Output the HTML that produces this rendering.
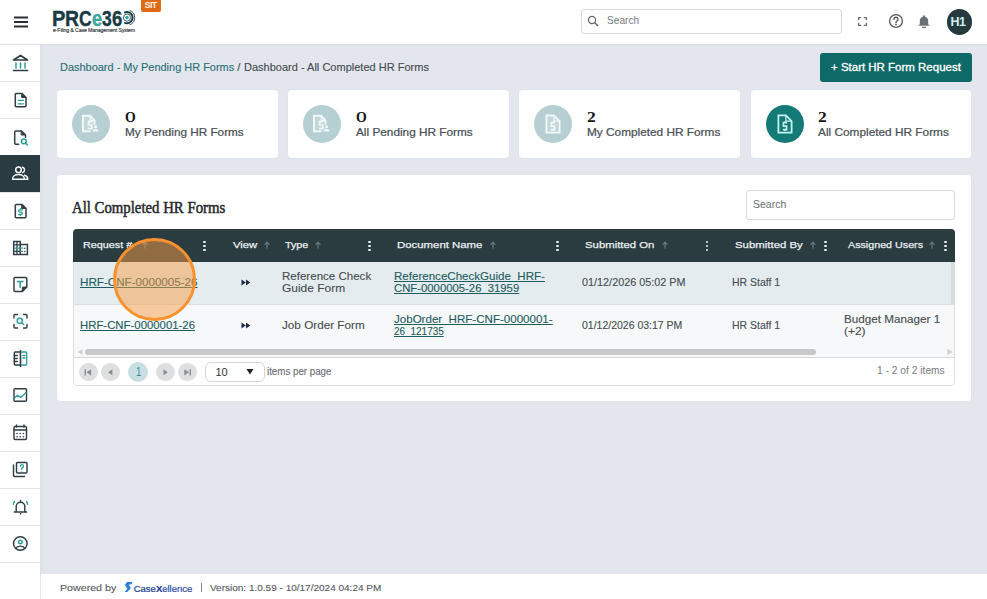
<!DOCTYPE html>
<html><head><meta charset="utf-8">
<style>
*{box-sizing:border-box;margin:0;padding:0}
html,body{width:987px;height:599px;overflow:hidden;background:#e3e7ed;font-family:"Liberation Sans",sans-serif;color:#3a3f44}
.abs{position:absolute}
.t{position:absolute;white-space:pre}
#hdr{left:0;top:0;width:987px;height:44px;background:#fff;box-shadow:0 1px 2px rgba(0,0,0,.06)}
#side{left:0;top:44px;width:40px;height:555px;background:#fff;box-shadow:1px 0 4px rgba(0,0,0,.045)}
.si{position:absolute;left:0;width:40px;height:37px;border-top:1px solid #e4e4e4}
.si svg{position:absolute;left:0;top:-1px}
.si.act{background:#2a3b41;border-top-color:#2a3b41}
#foot{left:40px;top:574px;width:947px;height:25px;background:#fff;border-left:1px solid #e8e8e8}
.card{position:absolute;background:#fff;border-radius:4px;box-shadow:0 0 2px rgba(0,0,0,.04)}
.stat{top:90px;width:221px;height:68px}
.circ{position:absolute;left:15px;top:15px;width:38px;height:38px;border-radius:50%;background:#b5cfd2}
.circ svg{position:absolute;left:0;top:0}
.kb{position:absolute;width:3px;height:11px;top:240.6px}
.kb i{position:absolute;left:.3px;width:2.5px;height:2.5px;border-radius:50%;background:#e9eff1}
.arr{position:absolute;top:241px;width:8px;height:8px}
.pb{position:absolute;top:362.5px;width:18.5px;height:18.5px;border-radius:50%;background:#dedfe0}
.pb svg{position:absolute;left:0;top:0}
</style></head><body>
<div id="hdr" class="abs">
  <svg class="abs" style="left:13px;top:16px" width="16" height="12" viewBox="0 0 16 12"><path d="M1 1.5h14M1 6h14M1 10.5h14" stroke="#2a2f33" stroke-width="2"/></svg>
  <div class="abs" style="left:141px;top:0;width:20px;height:11.5px;background:#de6a14;border-radius:0 0 2px 2px"></div>
  <div class="abs" style="left:580.5px;top:9.3px;width:261.5px;height:25.2px;border:1px solid #d9d9d9;border-radius:3px;background:#fff"></div>
  <svg class="abs" style="left:587px;top:15px" width="13" height="12" viewBox="0 0 13 12"><circle cx="5" cy="5" r="3.6" fill="none" stroke="#666" stroke-width="1.2"/><path d="M7.7 7.7l3.3 3.3" stroke="#666" stroke-width="1.5"/></svg>
  <svg class="abs" style="left:857px;top:16px" width="11" height="11" viewBox="0 0 11 11"><path d="M1.6 4.2V1.6h2.6M6.8 1.6h2.6v2.6M9.4 6.8v2.6H6.8M4.2 9.4H1.6V6.8" fill="none" stroke="#6a6e72" stroke-width="1.3"/></svg>
  <svg class="abs" style="left:888px;top:13px" width="16" height="16" viewBox="0 0 16 16"><circle cx="8" cy="8" r="6.4" fill="none" stroke="#55595d" stroke-width="1.3"/><path d="M6 6.3a2 2 0 1 1 2.8 1.8c-.5.2-.8.6-.8 1.1v.6" fill="none" stroke="#55595d" stroke-width="1.4" stroke-linecap="round"/><circle cx="8" cy="11.6" r=".85" fill="#55595d"/></svg>
  <svg class="abs" style="left:917px;top:14px" width="14" height="15" viewBox="0 0 14 15"><path d="M7 1.3a1 1 0 0 1 1 1v.5c2 .5 3.2 2.2 3.2 4.3v3.2l1.3 1.5H1.5l1.3-1.5V7.1c0-2.1 1.2-3.8 3.2-4.3v-.5a1 1 0 0 1 1-1z" fill="#6b6f77"/><path d="M5.5 13.3h3" stroke="#6b6f77" stroke-width="1.2" stroke-linecap="round"/></svg>
  <div class="abs" style="left:946.5px;top:8.8px;width:25.8px;height:25.8px;border-radius:50%;background:#253a3f"></div>

  <div class="t" style="left:52.12px;top:5px;font-size:22.8px;line-height:26px;font-weight:700;color:#183a45;transform:scaleX(0.88);transform-origin:0 0;-webkit-text-stroke:0.4px #183a45">P</div>
  <div class="t" style="left:64.85px;top:5px;font-size:22.8px;line-height:26px;font-weight:700;color:#183a45;transform:scaleX(0.85);transform-origin:0 0;-webkit-text-stroke:0.4px #183a45">R</div>
  <div class="t" style="left:79.13px;top:5px;font-size:22.8px;line-height:26px;font-weight:700;color:#183a45;transform:scaleX(0.77);transform-origin:0 0;-webkit-text-stroke:0.4px #183a45">C</div>
  <div class="t" style="left:92.30px;top:5px;font-size:22.8px;line-height:26px;font-weight:700;color:#3aa69e;transform:scaleX(0.8);transform-origin:0 0;-webkit-text-stroke:0.4px #3aa69e">e</div>
  <div class="t" style="left:102.20px;top:5px;font-size:22.8px;line-height:26px;font-weight:700;color:#183a45;transform:scaleX(0.77);transform-origin:0 0;-webkit-text-stroke:0.4px #183a45">3</div>
  <div class="t" style="left:112.30px;top:5px;font-size:22.8px;line-height:26px;font-weight:700;color:#183a45;transform:scaleX(0.81);transform-origin:0 0;-webkit-text-stroke:0.4px #183a45">6</div>
  <svg class="abs" style="left:117px;top:8px" width="20" height="20" viewBox="0 0 20 20"><path d="M7.2 4.75A5.6 5.6 0 1 1 7.2 14.45" fill="none" stroke="#183a45" stroke-width="1.9"/><path d="M12.63 2.36A7.7 7.7 0 0 1 12.63 16.84" fill="none" stroke="#183a45" stroke-width="0.9"/><circle cx="10" cy="9.6" r="3.6" fill="none" stroke="#183a45" stroke-width="0.8"/><circle cx="10" cy="9.6" r="1.8" fill="#3aa69e"/></svg>
  <div class="t" style="left:53px;top:28.3px;font-size:5.2px;line-height:5.2px;color:#2f363a;letter-spacing:-0.12px;-webkit-text-stroke:0.15px #2f363a">e-Filing &amp; Case Management System</div>
  <div class="t" style="left:144.5px;top:1.2px;font-size:9px;line-height:9px;font-weight:700;color:#fff3e0;letter-spacing:-0.6px">SIT</div>
  <div class="t" style="left:950.5px;top:16px;font-size:12.5px;line-height:12.5px;color:#d3eeee;letter-spacing:-0.6px;font-weight:700">H1</div>
</div>
<div id="side" class="abs"><div class="si" style="top:0px"><svg width="40" height="37" viewBox="0 0 40 37"><g fill="none" stroke-width="1.45" stroke-linecap="round" stroke-linejoin="round"><path d="M13.5 16 L20.5 11.5 L27.5 16 Z" stroke="#2f3d44" stroke-width="1.7"/><path d="M16 19v5M20.5 19v5M25 19v5" stroke="#2b9d97" stroke-width="1.5"/><path d="M13.5 26.5h14" stroke="#2f3d44" stroke-width="1.7"/></g></svg></div><div class="si" style="top:37px"><svg width="40" height="37" viewBox="0 0 40 37"><g fill="none" stroke-width="1.45" stroke-linecap="round" stroke-linejoin="round"><path d="M16.3 12.5h5.7l4 4v8.3a1 1 0 0 1-1 1h-8.7a1 1 0 0 1-1-1V13.5a1 1 0 0 1 1-1z" stroke="#2f3d44" stroke-width="1.5"/><path d="M22 12.5l4 4h-4z" fill="#2f3d44" stroke="#2f3d44" stroke-width="1"/><path d="M18.2 19.3h5.3M18.2 22.8h5.3" stroke="#2b9d97" stroke-width="1.2"/></g></svg></div><div class="si" style="top:74px"><svg width="40" height="37" viewBox="0 0 40 37"><g fill="none" stroke-width="1.45" stroke-linecap="round" stroke-linejoin="round"><path d="M18.7 26.3h-3a1 1 0 0 1-1-1V14a1 1 0 0 1 1-1h5.8l4 4v2.3" stroke="#2f3d44" stroke-width="1.5"/><path d="M21.5 13l4 4h-4z" fill="#2f3d44" stroke="#2f3d44" stroke-width="1"/><circle cx="23.8" cy="23.3" r="2.4" stroke="#2b9d97" stroke-width="1.5"/><path d="M25.6 25.1l1.9 1.9" stroke="#2b9d97" stroke-width="1.5"/></g></svg></div><div class="si act" style="top:111px"><svg width="40" height="37" viewBox="0 0 40 37"><g fill="none" stroke-width="1.45" stroke-linecap="round" stroke-linejoin="round" stroke="#fff"><circle cx="18.5" cy="14.8" r="2.8"/><path d="M22.5 12.2a2.8 2.8 0 0 1 0 5.4"/><path d="M12.5 24.3c0-3 2.7-4.8 6-4.8s6 1.8 6 4.8z"/><path d="M24.5 20.2c2 .5 3.3 2 3.3 4.1h-2"/></g></svg></div><div class="si" style="top:148px"><svg width="40" height="37" viewBox="0 0 40 37"><g fill="none" stroke-width="1.45" stroke-linecap="round" stroke-linejoin="round"><path d="M16.3 12.5h5.7l4 4v8.3a1 1 0 0 1-1 1h-8.7a1 1 0 0 1-1-1V13.5a1 1 0 0 1 1-1z" stroke="#2f3d44" stroke-width="1.5"/><path d="M22 12.5l4 4h-4z" fill="#2f3d44" stroke="#2f3d44" stroke-width="1"/><path d="M22.3 17.9h-2.5a1.1 1.1 0 0 0 0 2.3h1.3a1.1 1.1 0 0 1 0 2.3h-2.5M20.5 16.7v1.2M20.5 22.5v1.2" stroke="#2b9d97" stroke-width="1.3"/></g></svg></div><div class="si" style="top:185px"><svg width="40" height="37" viewBox="0 0 40 37"><g fill="none" stroke-linecap="butt" stroke-linejoin="miter"><path d="M13.7 25.4V12.6h6.5V25.4zM20.2 15.4h7.2V25.4h-7.2" stroke="#2f3d44" stroke-width="1.5"/><path d="M16.95 12.6V25.4M13.7 15.9h6.5M13.7 22.4h6.5" stroke="#2f3d44" stroke-width="1.3"/><path d="M13.7 19.15h9.5M20.2 22.4h3" stroke="#2b9d97" stroke-width="1.3"/><circle cx="24.8" cy="19.15" r=".75" fill="#2f3d44"/><circle cx="24.8" cy="22.4" r=".75" fill="#2f3d44"/></g></svg></div><div class="si" style="top:222px"><svg width="40" height="37" viewBox="0 0 40 37"><g fill="none" stroke-width="1.45" stroke-linecap="round" stroke-linejoin="round"><path d="M15 11.5h10.8a1 1 0 0 1 1 1v8.5l-4.5 4.5H15a1 1 0 0 1-1-1V12.5a1 1 0 0 1 1-1z" stroke="#2f3d44"/><path d="M22.3 25.5L26.8 21h-3.5a1 1 0 0 0-1 1z" fill="#2f3d44" stroke="#2f3d44" stroke-width="1"/><path d="M17.5 15.5h5.5M20.2 15.5v6" stroke="#2b9d97" stroke-width="1.5"/></g></svg></div><div class="si" style="top:259px"><svg width="40" height="37" viewBox="0 0 40 37"><g fill="none" stroke-width="1.45" stroke-linecap="round" stroke-linejoin="round"><path d="M14 15v-2.5a1 1 0 0 1 1-1h2.5M23.5 11.5H26a1 1 0 0 1 1 1V15M27 21.5V24a1 1 0 0 1-1 1h-2.5M17.5 25H15a1 1 0 0 1-1-1v-2.5" stroke="#2f3d44"/><circle cx="19.8" cy="17.8" r="2.6" stroke="#2b9d97"/><path d="M21.8 19.8l1.8 1.8" stroke="#2b9d97"/></g></svg></div><div class="si" style="top:296px"><svg width="40" height="37" viewBox="0 0 40 37"><g fill="none" stroke-width="1.45" stroke-linecap="round" stroke-linejoin="round"><path d="M19.5 12H15.3a1 1 0 0 0-1 1v11a1 1 0 0 0 1 1h4.2" stroke="#2f3d44"/><path d="M20.5 10.8V26.5" stroke="#2f3d44" stroke-width="1.6"/><path d="M14.3 15.5h3M14.3 18.5h3M14.3 21.5h3" stroke="#2f3d44" stroke-width="1.3"/><path d="M21.5 12h4.2a1 1 0 0 1 1 1v11a1 1 0 0 1-1 1h-4.2M23 15.5h2M23 18h2" stroke="#2b9d97" stroke-width="1.3"/></g></svg></div><div class="si" style="top:333px"><svg width="40" height="37" viewBox="0 0 40 37"><g fill="none" stroke-width="1.45" stroke-linecap="round" stroke-linejoin="round"><rect x="14" y="11.8" width="12.5" height="12.5" rx="1" stroke="#2f3d44"/><path d="M14.5 21l3.2-2.7 2.8 2.2 5.5-4.8" stroke="#2b9d97" stroke-width="1.4"/></g></svg></div><div class="si" style="top:370px"><svg width="40" height="37" viewBox="0 0 40 37"><g fill="none" stroke-width="1.45" stroke-linecap="round" stroke-linejoin="round"><rect x="14" y="12.5" width="12.5" height="13" rx="1.3" stroke="#2f3d44"/><path d="M14 16h12.5M16.5 11v2M24 11v2" stroke="#2f3d44"/><g fill="#2f3d44" stroke="none"><circle cx="17" cy="19.5" r=".8"/><circle cx="20.2" cy="19.5" r=".8"/><circle cx="23.4" cy="19.5" r=".8"/><circle cx="17" cy="22.7" r=".8"/><circle cx="20.2" cy="22.7" r=".8"/><circle cx="23.4" cy="22.7" r=".8"/></g></g></svg></div><div class="si" style="top:407px"><svg width="40" height="37" viewBox="0 0 40 37"><g fill="none" stroke-width="1.45" stroke-linecap="round" stroke-linejoin="round"><rect x="16.5" y="11.5" width="10.5" height="10.5" rx="1" stroke="#2f3d44"/><path d="M13.5 14v10.5a1 1 0 0 0 1 1h10" stroke="#2f3d44"/><path d="M20.3 15.2a1.6 1.6 0 1 1 2.2 1.5c-.5.2-.8.6-.8 1.1v.4" stroke="#2b9d97" stroke-width="1.3"/><circle cx="21.7" cy="20" r=".6" fill="#2b9d97" stroke="none"/></g></svg></div><div class="si" style="top:444px"><svg width="40" height="37" viewBox="0 0 40 37"><g fill="none" stroke-width="1.45" stroke-linecap="round" stroke-linejoin="round"><path d="M16.2 23.5v-5a4.3 4.3 0 0 1 8.6 0v5M14.3 24h12.4M20.5 25.8h.3M20.5 12.5v1.2" stroke="#2f3d44"/><path d="M14.5 13.5c-.6.8-1 1.8-1.1 2.8M26.5 13.5c.6.8 1 1.8 1.1 2.8" stroke="#2b9d97" stroke-width="1.4"/></g></svg></div><div class="si" style="top:481px"><svg width="40" height="37" viewBox="0 0 40 37"><g fill="none" stroke-width="1.45" stroke-linecap="round" stroke-linejoin="round"><circle cx="20.3" cy="18.5" r="6.8" stroke="#2f3d44"/><circle cx="20.3" cy="17" r="1.8" stroke="#2b9d97" stroke-width="1.4"/><path d="M15.6 23.4c1-1.5 2.8-2.3 4.7-2.3s3.7.8 4.7 2.3" stroke="#2f3d44"/></g></svg></div><div class="si" style="top:518px;height:1px"></div></div>
<div id="foot" class="abs"></div>

<div class="abs" style="left:820px;top:53px;width:151.5px;height:29px;background:#0f6966;border-radius:3px"></div>

<div class="card stat" style="left:57px"><div class="circ"><svg width="38" height="38" viewBox="0 0 38 38"><path d="M10.9 10.8h7.3l4.3 4.5v10.2H10.9z" fill="rgba(255,255,255,.2)"/><g fill="none" stroke="#f3f8f8" stroke-width="1.9" stroke-linejoin="miter"><path d="M10.9 26V10.8h7.3l4.3 4.5v4.5"/><path d="M18.2 10.8v4.5h4.3" stroke-width="1.3"/><path d="M20.2 16.6h-3.6v3.4h3.2v3.5h-3.6" stroke-width="1.7"/><path d="M10 26.3h8.5" /></g><circle cx="23.7" cy="21.8" r="1.5" fill="#f3f8f8"/><path d="M20.6 26.6c0-1.7 1.4-2.6 3.1-2.6s3.1.9 3.1 2.6z" fill="#f3f8f8"/></svg></div></div>
<div class="card stat" style="left:288px"><div class="circ"><svg width="38" height="38" viewBox="0 0 38 38"><path d="M10.9 10.8h7.3l4.3 4.5v10.2H10.9z" fill="rgba(255,255,255,.2)"/><g fill="none" stroke="#f3f8f8" stroke-width="1.9" stroke-linejoin="miter"><path d="M10.9 26V10.8h7.3l4.3 4.5v4.5"/><path d="M18.2 10.8v4.5h4.3" stroke-width="1.3"/><path d="M20.2 16.6h-3.6v3.4h3.2v3.5h-3.6" stroke-width="1.7"/><path d="M10 26.3h8.5" /></g><circle cx="23.7" cy="21.8" r="1.5" fill="#f3f8f8"/><path d="M20.6 26.6c0-1.7 1.4-2.6 3.1-2.6s3.1.9 3.1 2.6z" fill="#f3f8f8"/></svg></div></div>
<div class="card stat" style="left:519px"><div class="circ"><svg width="38" height="38" viewBox="0 0 38 38"><path d="M12.4 10.4h7.5l5.7 5.7v11.5H12.4z" fill="rgba(255,255,255,.2)"/><g fill="none" stroke="#f3f8f8" stroke-width="1.8" stroke-linejoin="miter"><path d="M12.4 10.4h7.5l5.7 5.7v11.5H12.4z"/><path d="M19.9 10.4v5.7h5.7" stroke-width="1.2"/><path d="M21 17.6h-3.6v3.5h3.2v3.5h-3.7M19.1 16.2v1.4M19.1 24.6v1.4" stroke-width="1.6"/></g></svg></div></div>
<div class="card stat" style="left:750.5px;width:220.5px"><div class="circ" style="background:#137a77"><svg width="38" height="38" viewBox="0 0 38 38"><path d="M12.4 10.4h7.5l5.7 5.7v11.5H12.4z" fill="rgba(255,255,255,0)"/><g fill="none" stroke="#c8f2ee" stroke-width="1.8" stroke-linejoin="miter"><path d="M12.4 10.4h7.5l5.7 5.7v11.5H12.4z"/><path d="M19.9 10.4v5.7h5.7" stroke-width="1.2"/><path d="M21 17.6h-3.6v3.5h3.2v3.5h-3.7M19.1 16.2v1.4M19.1 24.6v1.4" stroke-width="1.6"/></g></svg></div></div>

<div class="card" style="left:57px;top:175px;width:914px;height:226px"></div>
<div class="abs" style="left:745.7px;top:189.7px;width:209.7px;height:30px;border:1px solid #d8d8d8;border-radius:3px;background:#fff"></div>
<div class="t" style="left:753px;top:198.5px;font-size:10.5px;line-height:10.5px;color:#6a6e73">Search</div>

<!-- grid -->
<div class="abs" style="left:73px;top:229px;width:882px;height:156.5px;border-radius:4px;background:#fff;overflow:hidden">
  <div class="abs" style="left:0;top:33px;width:882px;height:42px;background:#e5ecef"></div>
  <div class="abs" style="left:0;top:75px;width:882px;height:1px;background:#d9e0e3"></div>
  <div class="abs" style="left:878px;top:33px;width:4px;height:42px;background:#d5dde0"></div>
  <div class="abs" style="left:0;top:76px;width:882px;height:51.5px;background:#f6f8f9"></div>
  <div class="abs" style="left:12px;top:120px;width:731px;height:5.8px;border-radius:3px;background:#c8c8c8"></div>
  <svg class="abs" style="left:3px;top:119px" width="8" height="8" viewBox="0 0 8 8"><path d="M6.5 1v6L1.5 4z" fill="#d0d0d0"/></svg>
  <svg class="abs" style="left:873px;top:119px" width="8" height="8" viewBox="0 0 8 8"><path d="M1.5 1v6L6.5 4z" fill="#d0d0d0"/></svg>
  <div class="abs" style="left:0;top:127.5px;width:882px;height:1.6px;background:#d6d6d6"></div>
  <div class="abs" style="left:0;top:0;width:882px;height:156.5px;border:1px solid #dedede;border-radius:4px"></div>
  <div class="abs" style="left:0;top:0;width:882px;height:33px;background:#2b3c41"></div>
</div>
<div class="pb" style="left:79.2px"><svg width="18.5" height="18.5" viewBox="0 0 18.5 18.5"><path d="M6.3 6.2v6.3" stroke="#8a8d90" stroke-width="1.4"/><path d="M12.2 6.2v6.2L7.5 9.3z" fill="#8a8d90"/></svg></div>
<div class="pb" style="left:101.2px"><svg width="18.5" height="18.5" viewBox="0 0 18.5 18.5"><path d="M11.3 6.3v6L7 9.3z" fill="#8a8d90"/></svg></div>
<div class="pb" style="left:128px;top:362px;width:20px;height:20px;background:#c7dfe2"></div>
<div class="pb" style="left:156px"><svg width="18.5" height="18.5" viewBox="0 0 18.5 18.5"><path d="M7.5 6.3v6L11.8 9.3z" fill="#8a8d90"/></svg></div>
<div class="pb" style="left:178px"><svg width="18.5" height="18.5" viewBox="0 0 18.5 18.5"><path d="M12.3 6.2v6.3" stroke="#8a8d90" stroke-width="1.4"/><path d="M6.3 6.2v6.2L11 9.3z" fill="#8a8d90"/></svg></div>
<div class="t" style="left:135.5px;top:366px;font-size:12px;line-height:12px;color:#3a8c9c;transform:scaleX(.8);transform-origin:0 0">1</div>
<div class="abs" style="left:205.3px;top:362.3px;width:59.7px;height:19.4px;border:1px solid #d4d4d4;border-radius:6px;background:#fff"></div>
<div class="t" style="left:215.5px;top:367px;font-size:11px;line-height:11px;color:#333">10</div>
<svg class="abs" style="left:246px;top:368px" width="8" height="7" viewBox="0 0 8 7"><path d="M0.5 1h7L4 6.5z" fill="#222"/></svg>

<div class="t" style="left:125px;top:110.6px;font-family:'Liberation Serif',serif;font-weight:700;font-size:13.8px;line-height:13.8px;color:#141414">O</div>
<div class="t" style="left:356px;top:110.6px;font-family:'Liberation Serif',serif;font-weight:700;font-size:13.8px;line-height:13.8px;color:#141414">O</div>
<div class="t" style="left:587.3px;top:111.3px;font-family:'Liberation Serif',serif;font-weight:700;font-size:14px;line-height:14px;color:#141414;transform:scaleX(1.25);transform-origin:0 0">2</div>
<div class="t" style="left:818px;top:111.3px;font-family:'Liberation Serif',serif;font-weight:700;font-size:14px;line-height:14px;color:#141414;transform:scaleX(1.25);transform-origin:0 0">2</div>
<div class="kb" style="left:203.2px"><i style="top:0"></i><i style="top:4.2px"></i><i style="top:8.4px"></i></div>
<div class="kb" style="left:368.0px"><i style="top:0"></i><i style="top:4.2px"></i><i style="top:8.4px"></i></div>
<div class="kb" style="left:555.9px"><i style="top:0"></i><i style="top:4.2px"></i><i style="top:8.4px"></i></div>
<div class="kb" style="left:705.7px"><i style="top:0"></i><i style="top:4.2px"></i><i style="top:8.4px"></i></div>
<div class="kb" style="left:824.2px"><i style="top:0"></i><i style="top:4.2px"></i><i style="top:8.4px"></i></div>
<div class="kb" style="left:944.0px"><i style="top:0"></i><i style="top:4.2px"></i><i style="top:8.4px"></i></div>
<svg class="arr" style="left:262.5px" width="8" height="8" viewBox="0 0 8 8"><path d="M4 7.5V1.3M1.5 3.8L4 1.2l2.5 2.6" fill="none" stroke="#687a7e" stroke-width="1.2"/></svg>
<svg class="arr" style="left:314.0px" width="8" height="8" viewBox="0 0 8 8"><path d="M4 7.5V1.3M1.5 3.8L4 1.2l2.5 2.6" fill="none" stroke="#687a7e" stroke-width="1.2"/></svg>
<svg class="arr" style="left:489.0px" width="8" height="8" viewBox="0 0 8 8"><path d="M4 7.5V1.3M1.5 3.8L4 1.2l2.5 2.6" fill="none" stroke="#687a7e" stroke-width="1.2"/></svg>
<svg class="arr" style="left:660.5px" width="8" height="8" viewBox="0 0 8 8"><path d="M4 7.5V1.3M1.5 3.8L4 1.2l2.5 2.6" fill="none" stroke="#687a7e" stroke-width="1.2"/></svg>
<svg class="arr" style="left:808.7px" width="8" height="8" viewBox="0 0 8 8"><path d="M4 7.5V1.3M1.5 3.8L4 1.2l2.5 2.6" fill="none" stroke="#687a7e" stroke-width="1.2"/></svg>
<svg class="arr" style="left:928.3px" width="8" height="8" viewBox="0 0 8 8"><path d="M4 7.5V1.3M1.5 3.8L4 1.2l2.5 2.6" fill="none" stroke="#687a7e" stroke-width="1.2"/></svg>
<svg class="arr" style="left:141px" width="8" height="8" viewBox="0 0 8 8"><path d="M4 7.5V1.3M1.5 3.8L4 1.2l2.5 2.6" fill="none" stroke="#687a7e" stroke-width="1.2"/></svg>
<svg class="abs" style="left:241px;top:278.5px" width="10" height="7" viewBox="0 0 10 7"><path d="M0.5 0.5v6l4.3-3zM5 0.5v6l4.3-3z" fill="#1c2a44"/></svg>
<svg class="abs" style="left:241px;top:321.5px" width="10" height="7" viewBox="0 0 10 7"><path d="M0.5 0.5v6l4.3-3zM5 0.5v6l4.3-3z" fill="#1c2a44"/></svg>
<svg class="abs" style="left:124px;top:581px" width="9" height="12" viewBox="0 0 9 12"><path d="M3 1h5.5L7.3 3.6H4.6l1.6 2.2c.6.9.5 1.5-.2 2.4L3.2 11H0.8l2.6-3.4L1.6 5.2C1 4.4 1.1 3.6 1.6 2.9z" fill="#2b7fd6"/></svg>
<div class="t" style="left:133.7px;top:583.5px;font-size:9.6px;line-height:10px;color:#223f8c;letter-spacing:-0.05px;-webkit-text-stroke:0.2px #223f8c">Case<span style="color:#1a3a9e;font-weight:700">X</span><span style="color:#3a55b5">ellence</span></div>
<div class="abs" style="left:200.5px;top:583px;width:1px;height:9px;background:#8a8a8a"></div>
<div class="t" style="left:60.00px;top:62px;font-size:10.47px;line-height:11px;transform:scaleX(1.0469);transform-origin:0 0;color:#2a6f78;font-weight:400;font-family:'Liberation Sans',sans-serif;-webkit-text-stroke:0.12px #2a6f78;">Dashboard - My Pending HR Forms</div>
<div class="t" style="left:234.30px;top:62px;font-size:10.47px;line-height:11px;transform:scaleX(1.1000);transform-origin:0 0;color:#444a50;font-weight:400;font-family:'Liberation Sans',sans-serif;-webkit-text-stroke:0.12px #444a50;"> / </div>
<div class="t" style="left:244.00px;top:62px;font-size:10.47px;line-height:11px;transform:scaleX(1.0523);transform-origin:0 0;color:#444a50;font-weight:400;font-family:'Liberation Sans',sans-serif;-webkit-text-stroke:0.12px #444a50;">Dashboard - All Completed HR Forms</div>
<div class="t" style="left:831.40px;top:61px;font-size:10.61px;line-height:12px;transform:scaleX(1.0821);transform-origin:0 0;color:#ffffff;font-weight:400;font-family:'Liberation Sans',sans-serif;-webkit-text-stroke:0.3px #ffffff;">+ Start HR Form Request</div>
<div class="t" style="left:125.30px;top:127px;font-size:10.20px;line-height:11px;transform:scaleX(1.1521);transform-origin:0 0;color:#4a4f55;font-weight:400;font-family:'Liberation Sans',sans-serif;-webkit-text-stroke:0.22px #4a4f55;">My Pending HR Forms</div>
<div class="t" style="left:356.10px;top:127px;font-size:10.20px;line-height:11px;transform:scaleX(1.1581);transform-origin:0 0;color:#4a4f55;font-weight:400;font-family:'Liberation Sans',sans-serif;-webkit-text-stroke:0.22px #4a4f55;">All Pending HR Forms</div>
<div class="t" style="left:587.30px;top:127px;font-size:10.20px;line-height:11px;transform:scaleX(1.1600);transform-origin:0 0;color:#4a4f55;font-weight:400;font-family:'Liberation Sans',sans-serif;-webkit-text-stroke:0.22px #4a4f55;">My Completed HR Forms</div>
<div class="t" style="left:817.90px;top:127px;font-size:10.20px;line-height:11px;transform:scaleX(1.1619);transform-origin:0 0;color:#4a4f55;font-weight:400;font-family:'Liberation Sans',sans-serif;-webkit-text-stroke:0.22px #4a4f55;">All Completed HR Forms</div>
<div class="t" style="left:72.30px;top:199px;font-size:15.71px;line-height:17px;transform:scaleX(0.9418);transform-origin:0 0;color:#26282e;font-weight:400;font-family:'Liberation Serif',serif;-webkit-text-stroke:0.5px #26282e;">All Completed HR Forms</div>
<div class="t" style="left:82.70px;top:239px;font-size:9.78px;line-height:11px;transform:scaleX(1.1062);transform-origin:0 0;color:#e9eff1;font-weight:400;font-family:'Liberation Sans',sans-serif;-webkit-text-stroke:0.25px #e9eff1;">Request #</div>
<div class="t" style="left:232.50px;top:239px;font-size:9.78px;line-height:11px;transform:scaleX(1.1563);transform-origin:0 0;color:#e9eff1;font-weight:400;font-family:'Liberation Sans',sans-serif;-webkit-text-stroke:0.25px #e9eff1;">View</div>
<div class="t" style="left:285.40px;top:239px;font-size:9.78px;line-height:11px;transform:scaleX(1.0993);transform-origin:0 0;color:#e9eff1;font-weight:400;font-family:'Liberation Sans',sans-serif;-webkit-text-stroke:0.25px #e9eff1;">Type</div>
<div class="t" style="left:397.20px;top:239px;font-size:9.78px;line-height:11px;transform:scaleX(1.1656);transform-origin:0 0;color:#e9eff1;font-weight:400;font-family:'Liberation Sans',sans-serif;-webkit-text-stroke:0.25px #e9eff1;">Document Name</div>
<div class="t" style="left:585.00px;top:239px;font-size:9.78px;line-height:11px;transform:scaleX(1.1626);transform-origin:0 0;color:#e9eff1;font-weight:400;font-family:'Liberation Sans',sans-serif;-webkit-text-stroke:0.25px #e9eff1;">Submitted On</div>
<div class="t" style="left:734.80px;top:239px;font-size:9.78px;line-height:11px;transform:scaleX(1.1678);transform-origin:0 0;color:#e9eff1;font-weight:400;font-family:'Liberation Sans',sans-serif;-webkit-text-stroke:0.25px #e9eff1;">Submitted By</div>
<div class="t" style="left:847.50px;top:239px;font-size:9.78px;line-height:11px;transform:scaleX(1.0969);transform-origin:0 0;color:#e9eff1;font-weight:400;font-family:'Liberation Sans',sans-serif;-webkit-text-stroke:0.25px #e9eff1;">Assigned Users</div>
<div class="t" style="left:80.00px;top:276px;font-size:11.17px;line-height:12px;transform:scaleX(1.0415);transform-origin:0 0;color:#1d5c61;font-weight:400;font-family:'Liberation Sans',sans-serif;text-decoration:underline;-webkit-text-stroke:0.12px #1d5c61;">HRF-CNF-0000005-26</div>
<div class="t" style="left:80.00px;top:319px;font-size:11.17px;line-height:12px;transform:scaleX(1.0193);transform-origin:0 0;color:#1d5c61;font-weight:400;font-family:'Liberation Sans',sans-serif;text-decoration:underline;-webkit-text-stroke:0.12px #1d5c61;">HRF-CNF-0000001-26</div>
<div class="t" style="left:282.00px;top:270px;font-size:10.89px;line-height:12px;transform:scaleX(1.0610);transform-origin:0 0;color:#474d52;font-weight:400;font-family:'Liberation Sans',sans-serif;-webkit-text-stroke:0.12px #474d52;">Reference Check</div>
<div class="t" style="left:282.00px;top:282px;font-size:10.89px;line-height:12px;transform:scaleX(1.1000);transform-origin:0 0;color:#474d52;font-weight:400;font-family:'Liberation Sans',sans-serif;-webkit-text-stroke:0.12px #474d52;">Guide Form</div>
<div class="t" style="left:282.00px;top:319px;font-size:10.89px;line-height:12px;transform:scaleX(1.0770);transform-origin:0 0;color:#474d52;font-weight:400;font-family:'Liberation Sans',sans-serif;-webkit-text-stroke:0.12px #474d52;">Job Order Form</div>
<div class="t" style="left:394.40px;top:270px;font-size:10.89px;line-height:12px;transform:scaleX(1.0627);transform-origin:0 0;color:#1d5c61;font-weight:400;font-family:'Liberation Sans',sans-serif;text-decoration:underline;-webkit-text-stroke:0.12px #1d5c61;">ReferenceCheckGuide_HRF-</div>
<div class="t" style="left:394.40px;top:282px;font-size:10.89px;line-height:12px;transform:scaleX(1.0404);transform-origin:0 0;color:#1d5c61;font-weight:400;font-family:'Liberation Sans',sans-serif;text-decoration:underline;-webkit-text-stroke:0.12px #1d5c61;">CNF-0000005-26_31959</div>
<div class="t" style="left:394.40px;top:313px;font-size:10.89px;line-height:12px;transform:scaleX(1.0626);transform-origin:0 0;color:#1d5c61;font-weight:400;font-family:'Liberation Sans',sans-serif;text-decoration:underline;-webkit-text-stroke:0.12px #1d5c61;">JobOrder_HRF-CNF-0000001-</div>
<div class="t" style="left:394.40px;top:325px;font-size:10.89px;line-height:12px;transform:scaleX(0.9133);transform-origin:0 0;color:#1d5c61;font-weight:400;font-family:'Liberation Sans',sans-serif;text-decoration:underline;-webkit-text-stroke:0.12px #1d5c61;">26_121735</div>
<div class="t" style="left:582.20px;top:276px;font-size:10.89px;line-height:12px;transform:scaleX(0.9964);transform-origin:0 0;color:#474d52;font-weight:400;font-family:'Liberation Sans',sans-serif;-webkit-text-stroke:0.12px #474d52;">01/12/2026 05:02 PM</div>
<div class="t" style="left:582.20px;top:319px;font-size:10.89px;line-height:12px;transform:scaleX(0.9647);transform-origin:0 0;color:#474d52;font-weight:400;font-family:'Liberation Sans',sans-serif;-webkit-text-stroke:0.12px #474d52;">01/12/2026 03:17 PM</div>
<div class="t" style="left:732.10px;top:276px;font-size:10.89px;line-height:12px;transform:scaleX(0.9629);transform-origin:0 0;color:#474d52;font-weight:400;font-family:'Liberation Sans',sans-serif;-webkit-text-stroke:0.12px #474d52;">HR Staff 1</div>
<div class="t" style="left:732.10px;top:319px;font-size:10.89px;line-height:12px;transform:scaleX(0.9629);transform-origin:0 0;color:#474d52;font-weight:400;font-family:'Liberation Sans',sans-serif;-webkit-text-stroke:0.12px #474d52;">HR Staff 1</div>
<div class="t" style="left:844.40px;top:313px;font-size:10.89px;line-height:12px;transform:scaleX(1.0743);transform-origin:0 0;color:#474d52;font-weight:400;font-family:'Liberation Sans',sans-serif;-webkit-text-stroke:0.12px #474d52;">Budget Manager 1</div>
<div class="t" style="left:844.40px;top:325px;font-size:10.89px;line-height:12px;transform:scaleX(1.1000);transform-origin:0 0;color:#474d52;font-weight:400;font-family:'Liberation Sans',sans-serif;-webkit-text-stroke:0.12px #474d52;">(+2)</div>
<div class="t" style="left:877.20px;top:365px;font-size:10.06px;line-height:11px;transform:scaleX(1.0194);transform-origin:0 0;color:#7b7f84;font-weight:400;font-family:'Liberation Sans',sans-serif;-webkit-text-stroke:0.05px #7b7f84;">1 - 2 of 2 items</div>
<div class="t" style="left:266.50px;top:366px;font-size:10.06px;line-height:11px;transform:scaleX(0.9697);transform-origin:0 0;color:#6a6e72;font-weight:400;font-family:'Liberation Sans',sans-serif;-webkit-text-stroke:0.12px #6a6e72;">items per page</div>
<div class="t" style="left:60.00px;top:582px;font-size:9.78px;line-height:11px;transform:scaleX(1.0905);transform-origin:0 0;color:#555a5f;font-weight:400;font-family:'Liberation Sans',sans-serif;-webkit-text-stroke:0.12px #555a5f;">Powered by</div>
<div class="t" style="left:210.30px;top:582px;font-size:9.78px;line-height:11px;transform:scaleX(1.0245);transform-origin:0 0;color:#555a5f;font-weight:400;font-family:'Liberation Sans',sans-serif;-webkit-text-stroke:0.12px #555a5f;">Version: 1.0.59 - 10/17/2024 04:24 PM</div>
<div class="t" style="left:607.40px;top:15px;font-size:10.34px;line-height:11px;transform:scaleX(0.9833);transform-origin:0 0;color:#777b80;font-weight:400;font-family:'Liberation Sans',sans-serif;">Search</div>

<!-- orange cursor circle -->
<div class="abs" style="left:113px;top:238px;width:83px;height:83px;border-radius:50%;border:3.5px solid #f7922f;background:rgba(247,156,69,.5)"></div>
</body></html>
